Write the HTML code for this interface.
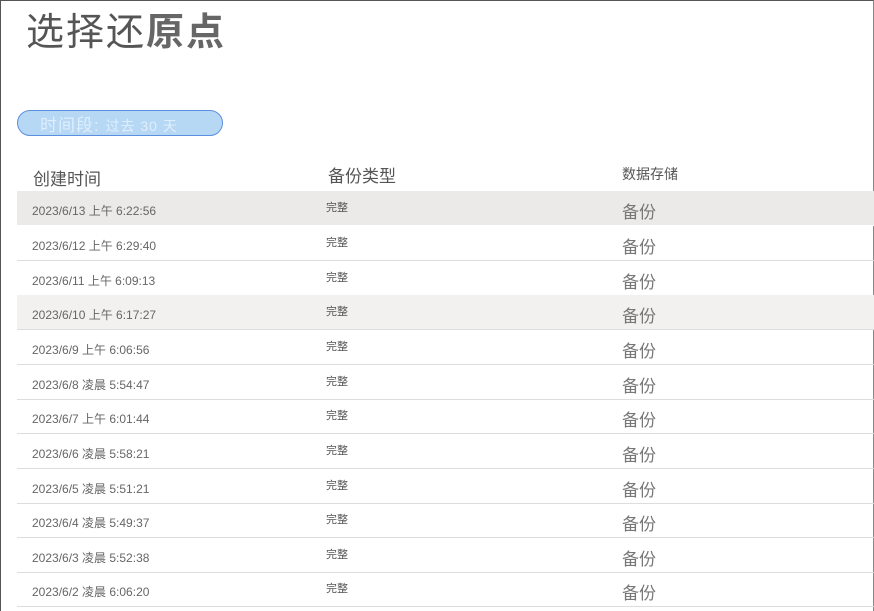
<!DOCTYPE html>
<html><head><meta charset="utf-8"><style>
body{margin:0;width:874px;height:610px;overflow:hidden;background:#fff;font-family:"Liberation Sans","Noto Sans CJK SC",sans-serif;}
.frame{position:absolute;left:0;top:0;width:872px;height:610px;border-left:1px solid #555;border-top:1px solid #555;border-right:1px solid #888;}
h1{position:absolute;left:26px;top:1px;margin:0;font-size:38px;font-weight:normal;color:#555;letter-spacing:2px}
h1 b{color:#666}
.pill{position:absolute;left:17px;top:110px;width:204px;height:24px;border:1px solid #5b8fe0;border-radius:13px;background:#b7d8f5;color:#dfeefc;font-size:17px;line-height:30px;box-sizing:content-box}
.pill span{position:absolute;left:22px;top:0;letter-spacing:1px}
.h{position:absolute;color:#555;font-size:17px}
.row{position:absolute;left:17px;width:857px;height:34px;border-bottom:1px solid #ddd}
.d{position:absolute;left:15px;top:11px;font-size:12px;color:#666}
.t{position:absolute;left:309px;top:8px;font-size:11px;color:#555}
.b{position:absolute;left:605px;top:7px;font-size:17px;color:#777}
</style></head><body>
<div class="frame"></div>
<h1>选择还<b>原点</b></h1>
<div class="pill"><span>时间段: <small style="font-size:14px">过去 30 天</small></span></div>
<div class="h" style="left:33px;top:165px">创建时间</div>
<div class="h" style="left:328px;top:162px">备份类型</div>
<div class="h" style="left:622px;top:164px;font-size:14px">数据存储</div>
<div class="row" style="top:191px;background:#ebeae9;border-bottom-color:#fff"><div class="d">2023/6/13 上午 6:22:56</div><div class="t">完整</div><div class="b">备份</div></div>
<div class="row" style="top:226px"><div class="d">2023/6/12 上午 6:29:40</div><div class="t">完整</div><div class="b">备份</div></div>
<div class="row" style="top:261px"><div class="d">2023/6/11 上午 6:09:13</div><div class="t">完整</div><div class="b">备份</div></div>
<div class="row" style="top:295px;background:#f2f1f0"><div class="d">2023/6/10 上午 6:17:27</div><div class="t">完整</div><div class="b">备份</div></div>
<div class="row" style="top:330px"><div class="d">2023/6/9 上午 6:06:56</div><div class="t">完整</div><div class="b">备份</div></div>
<div class="row" style="top:365px"><div class="d">2023/6/8 凌晨 5:54:47</div><div class="t">完整</div><div class="b">备份</div></div>
<div class="row" style="top:399px"><div class="d">2023/6/7 上午 6:01:44</div><div class="t">完整</div><div class="b">备份</div></div>
<div class="row" style="top:434px"><div class="d">2023/6/6 凌晨 5:58:21</div><div class="t">完整</div><div class="b">备份</div></div>
<div class="row" style="top:469px"><div class="d">2023/6/5 凌晨 5:51:21</div><div class="t">完整</div><div class="b">备份</div></div>
<div class="row" style="top:503px"><div class="d">2023/6/4 凌晨 5:49:37</div><div class="t">完整</div><div class="b">备份</div></div>
<div class="row" style="top:538px"><div class="d">2023/6/3 凌晨 5:52:38</div><div class="t">完整</div><div class="b">备份</div></div>
<div class="row" style="top:572px"><div class="d">2023/6/2 凌晨 6:06:20</div><div class="t">完整</div><div class="b">备份</div></div>
</body></html>
